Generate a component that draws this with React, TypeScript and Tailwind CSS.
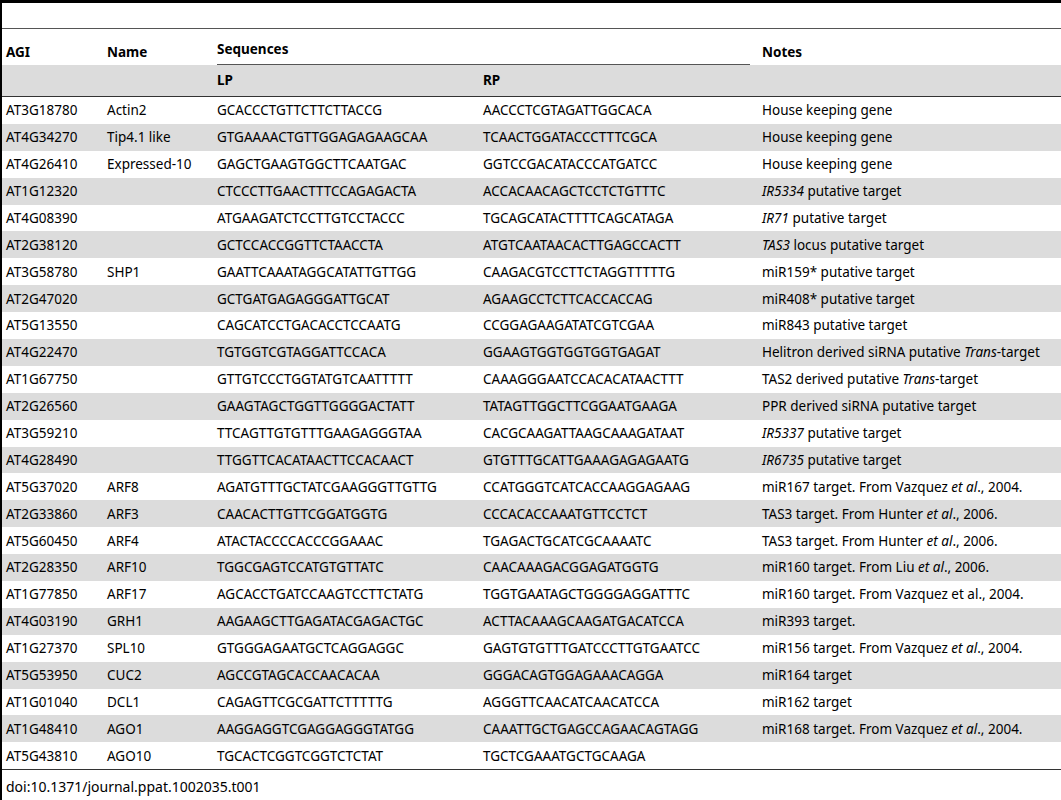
const rows: [string, string, string, string, React.ReactNode][] = [
  ['AT3G18780', 'Actin2', 'GCACCCTGTTCTTCTTACCG', 'AACCCTCGTAGATTGGCACA', 'House keeping gene'],
  ['AT4G34270', 'Tip4.1 like', 'GTGAAAACTGTTGGAGAGAAGCAA', 'TCAACTGGATACCCTTTCGCA', 'House keeping gene'],
  ['AT4G26410', 'Expressed-10', 'GAGCTGAAGTGGCTTCAATGAC', 'GGTCCGACATACCCATGATCC', 'House keeping gene'],
  ['AT1G12320', '', 'CTCCCTTGAACTTTCCAGAGACTA', 'ACCACAACAGCTCCTCTGTTTC', <><i>IR5334</i> putative target</>],
  ['AT4G08390', '', 'ATGAAGATCTCCTTGTCCTACCC', 'TGCAGCATACTTTTCAGCATAGA', <><i>IR71</i> putative target</>],
  ['AT2G38120', '', 'GCTCCACCGGTTCTAACCTA', 'ATGTCAATAACACTTGAGCCACTT', <><i>TAS3</i> locus putative target</>],
  ['AT3G58780', 'SHP1', 'GAATTCAAATAGGCATATTGTTGG', 'CAAGACGTCCTTCTAGGTTTTTG', 'miR159* putative target'],
  ['AT2G47020', '', 'GCTGATGAGAGGGATTGCAT', 'AGAAGCCTCTTCACCACCAG', 'miR408* putative target'],
  ['AT5G13550', '', 'CAGCATCCTGACACCTCCAATG', 'CCGGAGAAGATATCGTCGAA', 'miR843 putative target'],
  ['AT4G22470', '', 'TGTGGTCGTAGGATTCCACA', 'GGAAGTGGTGGTGGTGAGAT', <>Helitron derived siRNA putative <i>Trans</i>-target</>],
  ['AT1G67750', '', 'GTTGTCCCTGGTATGTCAATTTTT', 'CAAAGGGAATCCACACATAACTTT', <>TAS2 derived putative <i>Trans</i>-target</>],
  ['AT2G26560', '', 'GAAGTAGCTGGTTGGGGACTATT', 'TATAGTTGGCTTCGGAATGAAGA', 'PPR derived siRNA putative target'],
  ['AT3G59210', '', 'TTCAGTTGTGTTTGAAGAGGGTAA', 'CACGCAAGATTAAGCAAAGATAAT', <><i>IR5337</i> putative target</>],
  ['AT4G28490', '', 'TTGGTTCACATAACTTCCACAACT', 'GTGTTTGCATTGAAAGAGAGAATG', <><i>IR6735</i> putative target</>],
  ['AT5G37020', 'ARF8', 'AGATGTTTGCTATCGAAGGGTTGTTG', 'CCATGGGTCATCACCAAGGAGAAG', <>miR167 target. From Vazquez <i>et al</i>., 2004.</>],
  ['AT2G33860', 'ARF3', 'CAACACTTGTTCGGATGGTG', 'CCCACACCAAATGTTCCTCT', <>TAS3 target. From Hunter <i>et al</i>., 2006.</>],
  ['AT5G60450', 'ARF4', 'ATACTACCCCACCCGGAAAC', 'TGAGACTGCATCGCAAAATC', <>TAS3 target. From Hunter <i>et al</i>., 2006.</>],
  ['AT2G28350', 'ARF10', 'TGGCGAGTCCATGTGTTATC', 'CAACAAAGACGGAGATGGTG', <>miR160 target. From Liu <i>et al</i>., 2006.</>],
  ['AT1G77850', 'ARF17', 'AGCACCTGATCCAAGTCCTTCTATG', 'TGGTGAATAGCTGGGGAGGATTTC', 'miR160 target. From Vazquez et al., 2004.'],
  ['AT4G03190', 'GRH1', 'AAGAAGCTTGAGATACGAGACTGC', 'ACTTACAAAGCAAGATGACATCCA', 'miR393 target.'],
  ['AT1G27370', 'SPL10', 'GTGGGAGAATGCTCAGGAGGC', 'GAGTGTGTTTGATCCCTTGTGAATCC', <>miR156 target. From Vazquez <i>et al</i>., 2004.</>],
  ['AT5G53950', 'CUC2', 'AGCCGTAGCACCAACACAA', 'GGGACAGTGGAGAAACAGGA', 'miR164 target'],
  ['AT1G01040', 'DCL1', 'CAGAGTTCGCGATTCTTTTTG', 'AGGGTTCAACATCAACATCCA', 'miR162 target'],
  ['AT1G48410', 'AGO1', 'AAGGAGGTCGAGGAGGGTATGG', 'CAAATTGCTGAGCCAGAACAGTAGG', <>miR168 target. From Vazquez <i>et al</i>., 2004.</>],
  ['AT5G43810', 'AGO10', 'TGCACTCGGTCGGTCTCTAT', 'TGCTCGAAATGCTGCAAGA', ''],
];

const cols = 'grid grid-cols-[105px_107px_266px_278px_1fr]';

export default function App() {
  return (
    <div className="w-[1061px] h-[800px] bg-white text-[13.5px] text-black font-['Open_Sans','Noto_Sans',sans-serif]">
      <div className="border-l-2 border-black h-full">
        <div className="border-t-[3px] border-black h-[28px]" />
        <div className="border-t border-[#555]">
          <div className={`${cols} h-[36px] font-bold`}>
            <div className="pl-[4px] pt-[13px]">AGI</div>
            <div className="pt-[13px]">Name</div>
            <div className="col-span-2 pl-[3px] pr-[8px]">
              <div className="border-b border-[#555] h-[36px] pt-[10px]">Sequences</div>
            </div>
            <div className="pt-[13px] pl-[4px]">Notes</div>
          </div>
          <div className={`${cols} h-[32px] bg-[#dcdcdc] font-bold items-center border-b border-[#333]`}>
            <div />
            <div />
            <div className="pl-[3px]">LP</div>
            <div className="pl-[3px]">RP</div>
            <div />
          </div>
          {rows.map((r, i) => (
            <div key={r[0]} className={`${cols} h-[26.9px] items-center ${i % 2 ? 'bg-[#dcdcdc]' : ''}`}>
              <div className="pl-[4px]">{r[0]}</div>
              <div>{r[1]}</div>
              <div className="pl-[3px]">{r[2]}</div>
              <div className="pl-[3px]">{r[3]}</div>
              <div className="pl-[4px] whitespace-nowrap">{r[4]}</div>
            </div>
          ))}
          <div className="border-t border-[#333] pt-[6px] pl-[4px] text-[14px]">doi:10.1371/journal.ppat.1002035.t001</div>
        </div>
      </div>
    </div>
  );
}
